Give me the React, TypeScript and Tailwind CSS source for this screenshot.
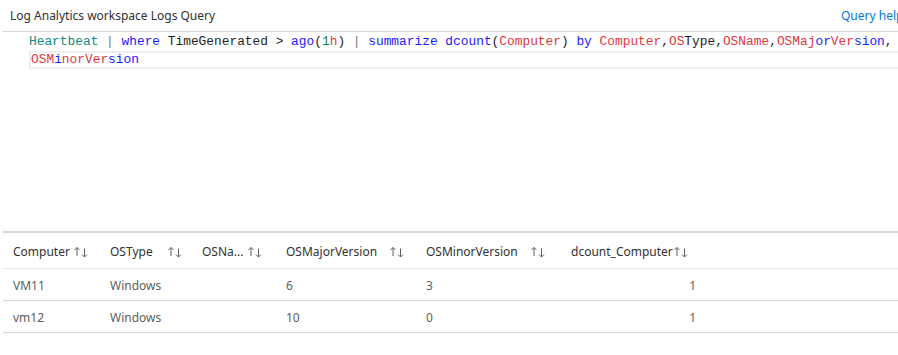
import React from 'react';

const RED = 'text-[#e0383e]';
const BLUE = 'text-[#1a1aff]';

function SortArrows() {
  return (
    <svg width="16" height="12" viewBox="0 0 16 12" className="shrink-0 text-[#605e5c]">
      <path d="M4 10V1.5M1.5 4L4 1.5L6.5 4" fill="none" stroke="currentColor" strokeWidth="1" />
      <path d="M11.5 2.5V11M9 8.5L11.5 11L14 8.5" fill="none" stroke="currentColor" strokeWidth="1" />
    </svg>
  );
}

const columns = [
  { label: 'Computer', width: 'w-[97px]', gap: 'gap-[3px]' },
  { label: 'OSType', width: 'w-[92px]', gap: 'gap-[14px]' },
  { label: 'OSNa...', width: 'w-[84px]', gap: 'gap-[4px]' },
  { label: 'OSMajorVersion', width: 'w-[140px]', gap: 'gap-[12px]' },
  { label: 'OSMinorVersion', width: 'w-[145px]', gap: 'gap-[12px]' },
  { label: 'dcount_Computer', width: 'w-[130px]', gap: 'gap-0' },
];

const rows = [
  ['VM11', 'Windows', '', '6', '3', '1'],
  ['vm12', 'Windows', '', '10', '0', '1'],
];

export default function App() {
  return (
    <div className="w-[898px] h-[355px] bg-white overflow-hidden" style={{ fontFamily: '"Noto Sans", "Open Sans", sans-serif' }}>
      {/* Title bar */}
      <div className="h-[31px] flex items-center pl-[10px] whitespace-nowrap text-[12px]">
        <div className="w-[831px] shrink-0 text-[#323130]">Log Analytics workspace Logs Query</div>
        <div className="shrink-0 text-[#0078d4]">Query help</div>
      </div>

      {/* Editor */}
      <div className="ml-[3px] border-t border-[#d6d6d6] h-[200px] pt-[1px] font-['Liberation_Mono',monospace] text-[12.85px] whitespace-nowrap">
        <div className="h-[18px] leading-[18px] pl-[26px] text-[#1e1e1e]">
          <span className="text-[#0f8a80]">Heartbeat</span> <span className="text-[#777]">|</span>{' '}
          <span className={BLUE}>where</span> TimeGenerated &gt; <span className={BLUE}>ago</span>(
          <span className="text-[#098658]">1</span>
          <span className={RED}>h</span>) <span className="text-[#777]">|</span>{' '}
          <span className={BLUE}>summarize</span> <span className={BLUE}>dcount</span>(
          <span className={RED}>Computer</span>) <span className={BLUE}>by</span>{' '}
          <span className={RED}>Computer</span>,<span className={RED}>OS</span>Type,
          <span className={RED}>OSName</span>,<span className={RED}>OSMaj</span>
          <span className={BLUE}>or</span>
          <span className={RED}>Ver</span>
          <span className={BLUE}>sion</span>,
        </div>
        <div className="ml-[26px] h-[18px] leading-[14px] border-2 border-[#eeeeee] border-r-0">
          <span className={RED}>OSM</span>
          <span className={BLUE}>i</span>
          <span className={RED}>norVer</span>
          <span className={BLUE}>sion</span>
        </div>
      </div>

      {/* Results table */}
      <div className="ml-[3px] border-t-2 border-[#d8d8d8] text-[12px]">
        <div className="h-[36px] pt-[3px] flex items-center pl-[10px] border-b border-[#e6e6e6] text-[#323130]">
          {columns.map((c) => (
            <div key={c.label} className={`${c.width} shrink-0 flex items-center ${c.gap}`}>
              <span className="whitespace-nowrap">{c.label}</span>
              <SortArrows />
            </div>
          ))}
        </div>
        {rows.map((r, i) => (
          <div key={i} className="h-[32px] pt-[2px] flex items-center pl-[10px] border-b border-[#d4d4d4] text-[#605e5c]">
            {r.map((v, j) => (
              <div
                key={j}
                className={`${columns[j].width} shrink-0 ${j === 5 ? 'text-right pr-[5px]' : ''}`}
              >
                {v}
              </div>
            ))}
          </div>
        ))}
      </div>
    </div>
  );
}
